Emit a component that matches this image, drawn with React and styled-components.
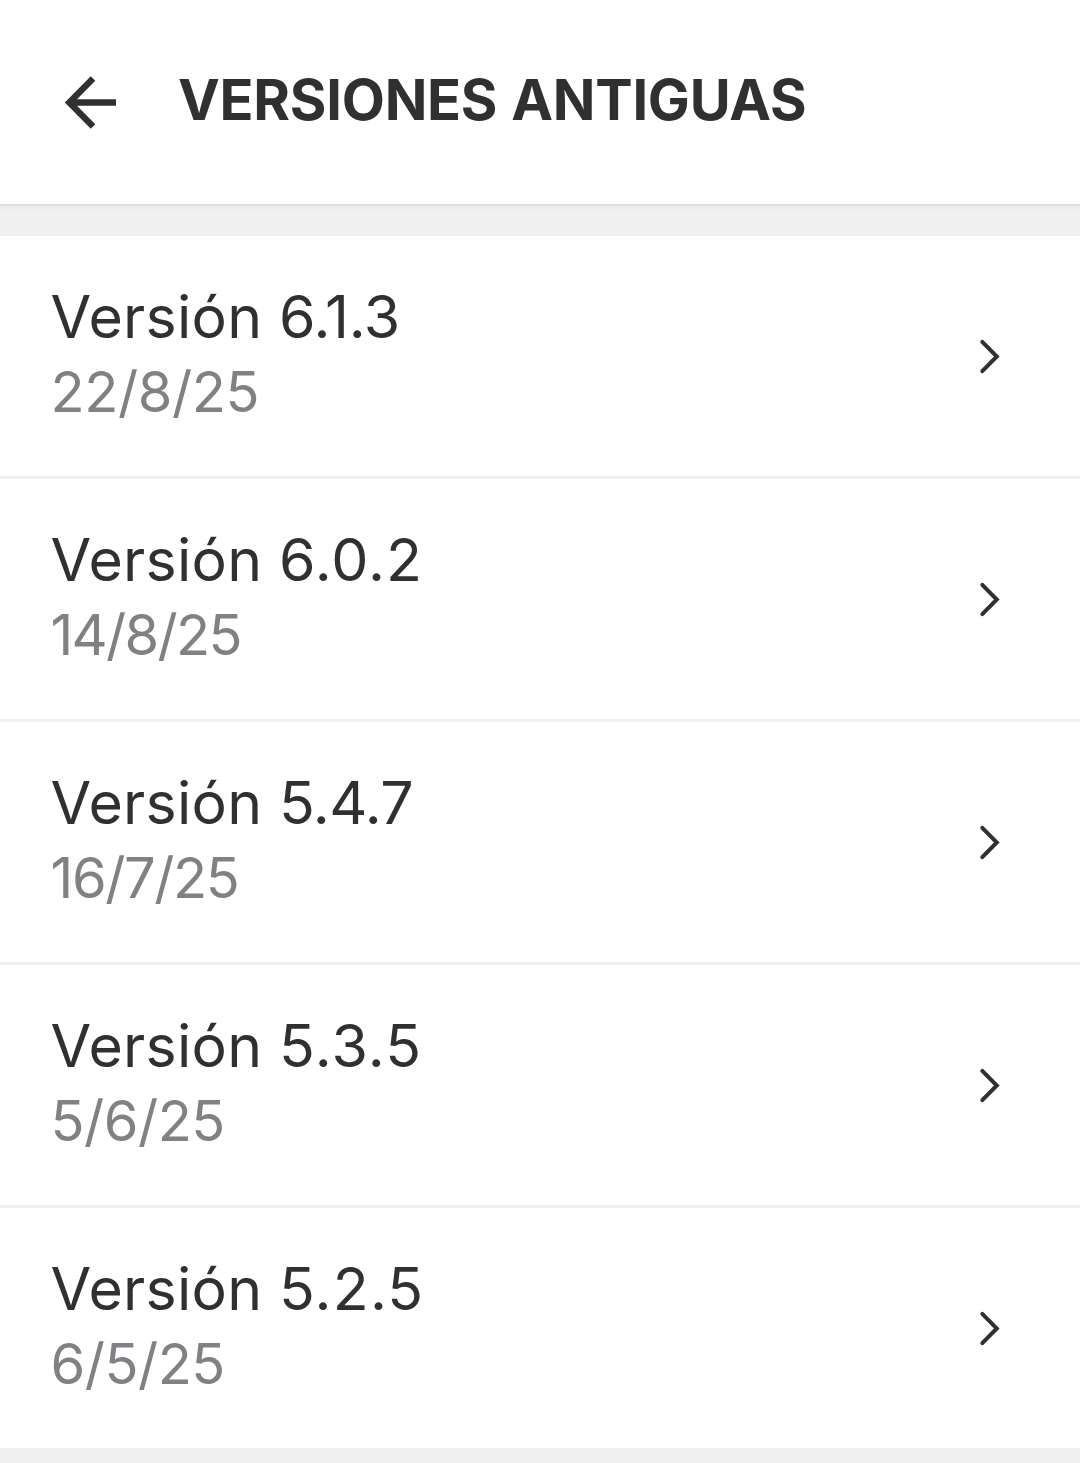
import React from "react";
import styled, { createGlobalStyle } from "styled-components";

const GlobalStyle = createGlobalStyle`
  *, *::before, *::after { box-sizing: border-box; }
  body {
    margin: 0;
    background: #f0f0f0;
    color: #303030;
    font-family: Inter, "Liberation Sans", sans-serif;
  }
  h1, h2, p, ul { margin: 0; padding: 0; }
`;

const Screen = styled.main`
  display: flex;
  flex-direction: column;
  width: 1080px;
  height: 1463px;
  overflow: hidden;
  background: #f0f0f0;
`;

const Header = styled.header`
  display: flex;
  align-items: center;
  flex: none;
  height: 204px;
  padding: 0 64px;
  background: #fff;
`;

const HeaderShadow = styled.div`
  flex: none;
  height: 32px;
  background: linear-gradient(#d6d6d6 0, #dedede 1px, #e6e6e6 2px, #ececec 4px, #f0f0f0 7px);
`;

const BackButton = styled.button`
  display: flex;
  width: 54px;
  height: 54px;
  padding: 0;
  border: 0;
  background: none;
  color: inherit;
`;

const Title = styled.h1`
  margin-left: 60px;
  padding-bottom: 5px;
  font-size: 56px;
  line-height: 68px;
  font-weight: 700;
  letter-spacing: -0.25px;
  word-spacing: 1px;
  white-space: nowrap;
`;

const VersionList = styled.ul`
  flex: none;
  list-style: none;
  background: #fff;
`;

const VersionRow = styled.li`
  display: flex;
  align-items: center;
  justify-content: space-between;
  height: 240px;
  padding: 0 78px 0 50.5px;

  & + & {
    height: 243px;
    border-top: 3px solid #f0f0f0;
  }
`;

const RowText = styled.div`
  display: flex;
  flex-direction: column;
  padding-bottom: 3px;
  white-space: nowrap;
`;

const VersionName = styled.h2`
  font-size: 59px;
  line-height: 76px;
  font-weight: 400;
  letter-spacing: 0.25px;
`;

const VersionNumber = styled.span`
  letter-spacing: ${({ $tracking }) => $tracking}px;
`;

const VersionDate = styled.p`
  font-size: 56px;
  line-height: 75px;
  color: #808184;
  letter-spacing: ${({ $tracking }) => $tracking}px;
`;

const ArrowLeft = () => (
  <svg width="54" height="54" viewBox="0 0 54 54" fill="none" stroke="currentColor" strokeWidth="6.4">
    <path d="M29 3.5 L5.3 27.5 L29 51.5 M5.3 27.5 H52" />
  </svg>
);

const ChevronRight = () => (
  <svg width="24" height="38" viewBox="0 0 24 38" fill="none" stroke="currentColor" strokeWidth="4" strokeLinecap="round">
    <path d="M4.3 4.8 L18.8 19.5 L4.3 34.2" />
  </svg>
);

const versions = [
  { number: "6.1.3", date: "22/8/25", numberTracking: -0.3, dateTracking: -0.4 },
  { number: "6.0.2", date: "14/8/25", numberTracking: 1, dateTracking: -1.7 },
  { number: "5.4.7", date: "16/7/25", numberTracking: -0.6, dateTracking: -1.4 },
  { number: "5.3.5", date: "5/6/25", numberTracking: 1.3, dateTracking: -0.5 },
  { number: "5.2.5", date: "6/5/25", numberTracking: 1.2, dateTracking: -0.5 },
];

export default function App() {
  return (
    <Screen>
      <GlobalStyle />
      <Header>
        <BackButton aria-label="Atrás">
          <ArrowLeft />
        </BackButton>
        <Title>VERSIONES ANTIGUAS</Title>
      </Header>
      <HeaderShadow />
      <VersionList>
        {versions.map((v) => (
          <VersionRow key={v.number}>
            <RowText>
              <VersionName>
                Versión <VersionNumber $tracking={v.numberTracking}>{v.number}</VersionNumber>
              </VersionName>
              <VersionDate $tracking={v.dateTracking}>{v.date}</VersionDate>
            </RowText>
            <ChevronRight />
          </VersionRow>
        ))}
      </VersionList>
    </Screen>
  );
}
